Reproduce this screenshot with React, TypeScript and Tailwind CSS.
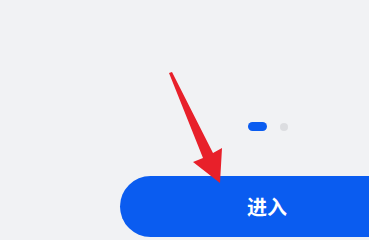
export default function App() {
  return (
    <div className="relative h-[240px] w-[369px] overflow-hidden bg-[#f1f2f4] font-['Noto_Sans_CJK_SC',sans-serif]">
      <div className="flex flex-col pt-[122px]">
        <div className="ml-[248px] flex items-center gap-[13px]">
          <span className="h-[9px] w-[19px] rounded-full bg-[#0a5cf0]" />
          <span className="h-[8px] w-[8px] rounded-full bg-[#dcdde0]" />
        </div>
        <button className="ml-[120px] mt-[45px] flex h-[61px] w-[294px] shrink-0 items-center justify-center rounded-full bg-[#0a5cf0] text-[20px] font-bold text-white">
          进入
        </button>
      </div>
      <svg className="absolute left-0 top-0" width="369" height="240" viewBox="0 0 369 240">
        <path d="M169 73 L172 72 L213 153 L222 148 L220 183 L193 162 L203 158 Z" fill="#e8202a" />
      </svg>
    </div>
  );
}
